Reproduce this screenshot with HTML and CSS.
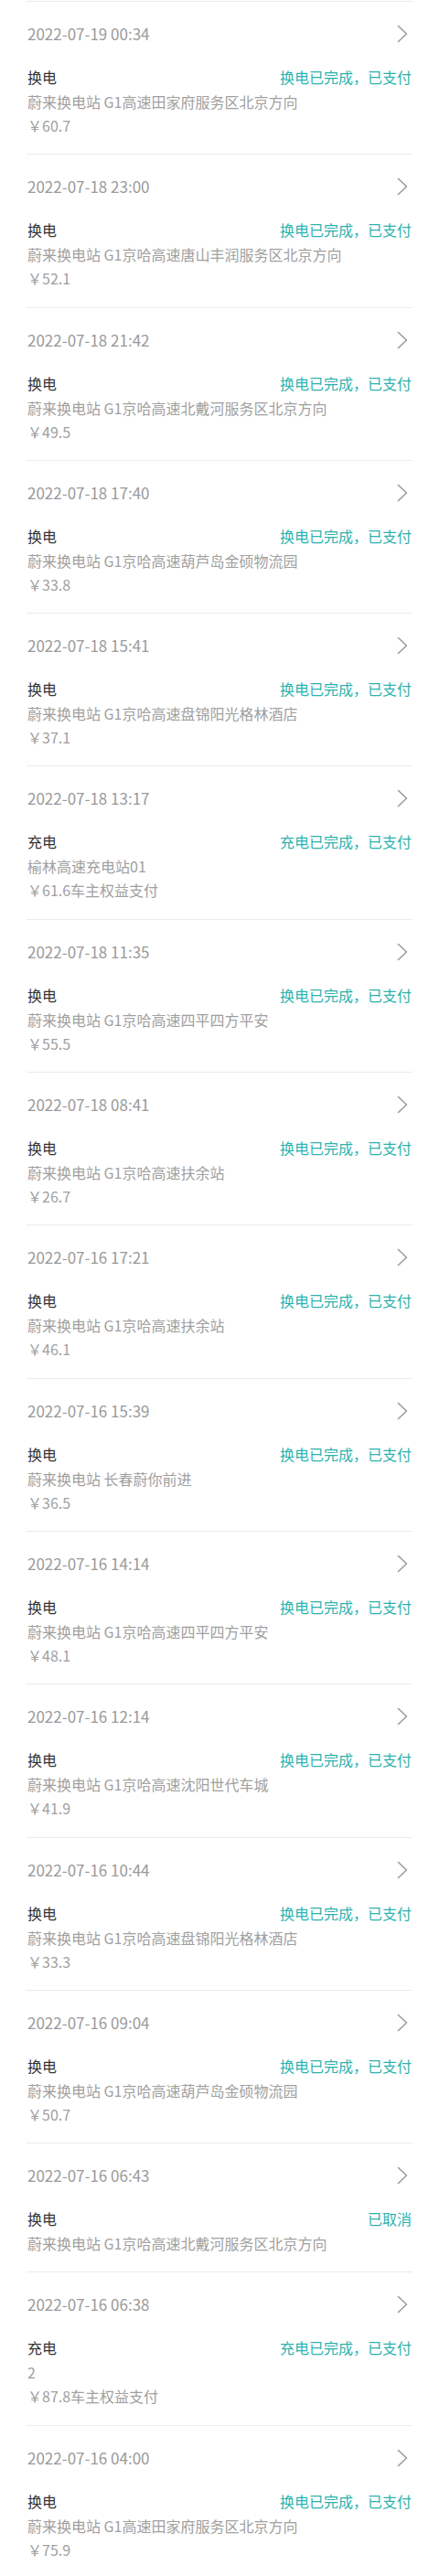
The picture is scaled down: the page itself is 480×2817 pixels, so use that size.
FILE: index.html
```html
<!DOCTYPE html>
<html lang="zh-CN">
<head>
<meta charset="utf-8">
<title>订单列表</title>
<link rel="stylesheet" href="styles.css">
</head>
<body>
<div class="list">
  <div class="item">
    <div class="head"><span class="date">2022-07-19 00:34</span><svg class="chev" width="12" height="20" viewBox="0 0 12 20"><polyline points="1.5,1.5 10.5,10 1.5,18.5"/></svg></div>
    <div class="main">
      <div class="row"><span class="type">换电</span><span class="status">换电已完成，已支付</span></div>
      <div class="addr">蔚来换电站 G1高速田家府服务区北京方向</div>
      <div class="price">￥60.7</div>
    </div>
  </div>
  <div class="item">
    <div class="head"><span class="date">2022-07-18 23:00</span><svg class="chev" width="12" height="20" viewBox="0 0 12 20"><polyline points="1.5,1.5 10.5,10 1.5,18.5"/></svg></div>
    <div class="main">
      <div class="row"><span class="type">换电</span><span class="status">换电已完成，已支付</span></div>
      <div class="addr">蔚来换电站 G1京哈高速唐山丰润服务区北京方向</div>
      <div class="price">￥52.1</div>
    </div>
  </div>
  <div class="item">
    <div class="head"><span class="date">2022-07-18 21:42</span><svg class="chev" width="12" height="20" viewBox="0 0 12 20"><polyline points="1.5,1.5 10.5,10 1.5,18.5"/></svg></div>
    <div class="main">
      <div class="row"><span class="type">换电</span><span class="status">换电已完成，已支付</span></div>
      <div class="addr">蔚来换电站 G1京哈高速北戴河服务区北京方向</div>
      <div class="price">￥49.5</div>
    </div>
  </div>
  <div class="item">
    <div class="head"><span class="date">2022-07-18 17:40</span><svg class="chev" width="12" height="20" viewBox="0 0 12 20"><polyline points="1.5,1.5 10.5,10 1.5,18.5"/></svg></div>
    <div class="main">
      <div class="row"><span class="type">换电</span><span class="status">换电已完成，已支付</span></div>
      <div class="addr">蔚来换电站 G1京哈高速葫芦岛金硕物流园</div>
      <div class="price">￥33.8</div>
    </div>
  </div>
  <div class="item">
    <div class="head"><span class="date">2022-07-18 15:41</span><svg class="chev" width="12" height="20" viewBox="0 0 12 20"><polyline points="1.5,1.5 10.5,10 1.5,18.5"/></svg></div>
    <div class="main">
      <div class="row"><span class="type">换电</span><span class="status">换电已完成，已支付</span></div>
      <div class="addr">蔚来换电站 G1京哈高速盘锦阳光格林酒店</div>
      <div class="price">￥37.1</div>
    </div>
  </div>
  <div class="item">
    <div class="head"><span class="date">2022-07-18 13:17</span><svg class="chev" width="12" height="20" viewBox="0 0 12 20"><polyline points="1.5,1.5 10.5,10 1.5,18.5"/></svg></div>
    <div class="main">
      <div class="row"><span class="type">充电</span><span class="status">充电已完成，已支付</span></div>
      <div class="addr">榆林高速充电站01</div>
      <div class="price">￥61.6车主权益支付</div>
    </div>
  </div>
  <div class="item">
    <div class="head"><span class="date">2022-07-18 11:35</span><svg class="chev" width="12" height="20" viewBox="0 0 12 20"><polyline points="1.5,1.5 10.5,10 1.5,18.5"/></svg></div>
    <div class="main">
      <div class="row"><span class="type">换电</span><span class="status">换电已完成，已支付</span></div>
      <div class="addr">蔚来换电站 G1京哈高速四平四方平安</div>
      <div class="price">￥55.5</div>
    </div>
  </div>
  <div class="item">
    <div class="head"><span class="date">2022-07-18 08:41</span><svg class="chev" width="12" height="20" viewBox="0 0 12 20"><polyline points="1.5,1.5 10.5,10 1.5,18.5"/></svg></div>
    <div class="main">
      <div class="row"><span class="type">换电</span><span class="status">换电已完成，已支付</span></div>
      <div class="addr">蔚来换电站 G1京哈高速扶余站</div>
      <div class="price">￥26.7</div>
    </div>
  </div>
  <div class="item">
    <div class="head"><span class="date">2022-07-16 17:21</span><svg class="chev" width="12" height="20" viewBox="0 0 12 20"><polyline points="1.5,1.5 10.5,10 1.5,18.5"/></svg></div>
    <div class="main">
      <div class="row"><span class="type">换电</span><span class="status">换电已完成，已支付</span></div>
      <div class="addr">蔚来换电站 G1京哈高速扶余站</div>
      <div class="price">￥46.1</div>
    </div>
  </div>
  <div class="item">
    <div class="head"><span class="date">2022-07-16 15:39</span><svg class="chev" width="12" height="20" viewBox="0 0 12 20"><polyline points="1.5,1.5 10.5,10 1.5,18.5"/></svg></div>
    <div class="main">
      <div class="row"><span class="type">换电</span><span class="status">换电已完成，已支付</span></div>
      <div class="addr">蔚来换电站 长春蔚你前进</div>
      <div class="price">￥36.5</div>
    </div>
  </div>
  <div class="item">
    <div class="head"><span class="date">2022-07-16 14:14</span><svg class="chev" width="12" height="20" viewBox="0 0 12 20"><polyline points="1.5,1.5 10.5,10 1.5,18.5"/></svg></div>
    <div class="main">
      <div class="row"><span class="type">换电</span><span class="status">换电已完成，已支付</span></div>
      <div class="addr">蔚来换电站 G1京哈高速四平四方平安</div>
      <div class="price">￥48.1</div>
    </div>
  </div>
  <div class="item">
    <div class="head"><span class="date">2022-07-16 12:14</span><svg class="chev" width="12" height="20" viewBox="0 0 12 20"><polyline points="1.5,1.5 10.5,10 1.5,18.5"/></svg></div>
    <div class="main">
      <div class="row"><span class="type">换电</span><span class="status">换电已完成，已支付</span></div>
      <div class="addr">蔚来换电站 G1京哈高速沈阳世代车城</div>
      <div class="price">￥41.9</div>
    </div>
  </div>
  <div class="item">
    <div class="head"><span class="date">2022-07-16 10:44</span><svg class="chev" width="12" height="20" viewBox="0 0 12 20"><polyline points="1.5,1.5 10.5,10 1.5,18.5"/></svg></div>
    <div class="main">
      <div class="row"><span class="type">换电</span><span class="status">换电已完成，已支付</span></div>
      <div class="addr">蔚来换电站 G1京哈高速盘锦阳光格林酒店</div>
      <div class="price">￥33.3</div>
    </div>
  </div>
  <div class="item">
    <div class="head"><span class="date">2022-07-16 09:04</span><svg class="chev" width="12" height="20" viewBox="0 0 12 20"><polyline points="1.5,1.5 10.5,10 1.5,18.5"/></svg></div>
    <div class="main">
      <div class="row"><span class="type">换电</span><span class="status">换电已完成，已支付</span></div>
      <div class="addr">蔚来换电站 G1京哈高速葫芦岛金硕物流园</div>
      <div class="price">￥50.7</div>
    </div>
  </div>
  <div class="item">
    <div class="head"><span class="date">2022-07-16 06:43</span><svg class="chev" width="12" height="20" viewBox="0 0 12 20"><polyline points="1.5,1.5 10.5,10 1.5,18.5"/></svg></div>
    <div class="main">
      <div class="row"><span class="type">换电</span><span class="status">已取消</span></div>
      <div class="addr">蔚来换电站 G1京哈高速北戴河服务区北京方向</div>
    </div>
  </div>
  <div class="item">
    <div class="head"><span class="date">2022-07-16 06:38</span><svg class="chev" width="12" height="20" viewBox="0 0 12 20"><polyline points="1.5,1.5 10.5,10 1.5,18.5"/></svg></div>
    <div class="main">
      <div class="row"><span class="type">充电</span><span class="status">充电已完成，已支付</span></div>
      <div class="addr">2</div>
      <div class="price">￥87.8车主权益支付</div>
    </div>
  </div>
  <div class="item">
    <div class="head"><span class="date">2022-07-16 04:00</span><svg class="chev" width="12" height="20" viewBox="0 0 12 20"><polyline points="1.5,1.5 10.5,10 1.5,18.5"/></svg></div>
    <div class="main">
      <div class="row"><span class="type">换电</span><span class="status">换电已完成，已支付</span></div>
      <div class="addr">蔚来换电站 G1高速田家府服务区北京方向</div>
      <div class="price">￥75.9</div>
    </div>
  </div>
</div>
</body>
</html>
```
FILE: styles.css
```css
html, body {
  margin: 0;
  padding: 0;
  background: #ffffff;
}
body {
  font-family: "Noto Sans CJK SC", "Noto Sans", sans-serif;
  color: #333333;
}
.list {
  padding: 1px 29px 0;
}
.item {
  border-top: 1px solid #ebebeb;
  padding: 22px 1px 18.3px;
}
.head {
  display: flex;
  justify-content: space-between;
  align-items: center;
  height: 26px;
}
.date {
  font-size: 17px;
  line-height: 26px;
  color: #9a9a9a;
}
.chev {
  display: block;
  margin-right: 4px;
}
.chev polyline {
  fill: none;
  stroke: #9c9c9c;
  stroke-width: 1.6;
  stroke-linecap: round;
  stroke-linejoin: round;
}
.main {
  margin-top: 20px;
}
.row {
  display: flex;
  justify-content: space-between;
  align-items: center;
  height: 28px;
}
.type {
  font-size: 16px;
  font-weight: 400;
  line-height: 28px;
  color: #333333;
}
.status {
  font-size: 16px;
  font-weight: 400;
  line-height: 28px;
  color: #2db2ae;
}
.addr,
.price {
  font-size: 16px;
  line-height: 26px;
  color: #a0a0a0;
}
```
